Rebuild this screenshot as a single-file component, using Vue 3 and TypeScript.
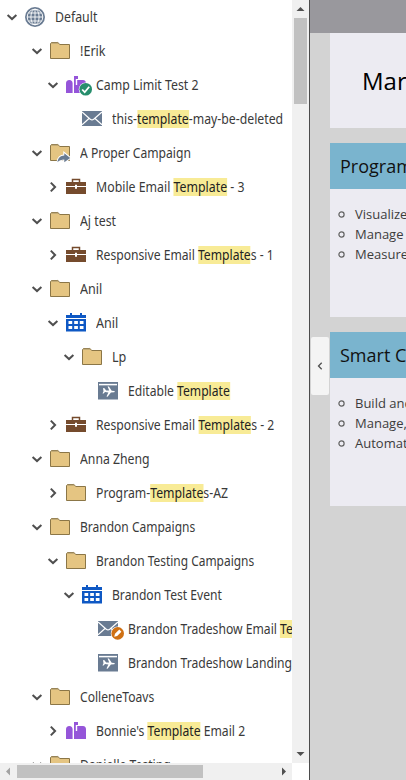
<script setup lang="ts">
type Icon = 'globe' | 'folder' | 'shared' | 'mailbox' | 'mailboxOk' | 'mail' | 'mailDraft' | 'briefcase' | 'calendar' | 'page'
interface Row {
  level: number
  icon: Icon
  open?: boolean
  parts: string[]
  fit?: number
}
// Odd-indexed parts are search matches; fit is the label's horizontal condensing.
const rows: Row[] = [
  { level: 0, icon: 'globe', open: true, parts: ['Default'] },
  { level: 1, icon: 'folder', open: true, parts: ['!Erik'], fit: 0.9 },
  { level: 2, icon: 'mailboxOk', open: true, parts: ['Camp Limit Test 2'] },
  { level: 3, icon: 'mail', parts: ['this-', 'template', '-may-be-deleted'], fit: 0.876 },
  { level: 1, icon: 'shared', open: true, parts: ['A Proper Campaign'], fit: 0.866 },
  { level: 2, icon: 'briefcase', open: false, parts: ['Mobile Email ', 'Template', ' - 3'] },
  { level: 1, icon: 'folder', open: true, parts: ['Aj test'] },
  { level: 2, icon: 'briefcase', open: false, parts: ['Responsive Email ', 'Template', 's - 1'], fit: 0.867 },
  { level: 1, icon: 'folder', open: true, parts: ['Anil'], fit: 0.9 },
  { level: 2, icon: 'calendar', open: true, parts: ['Anil'], fit: 0.9 },
  { level: 3, icon: 'folder', open: true, parts: ['Lp'], fit: 0.9 },
  { level: 4, icon: 'page', parts: ['Editable ', 'Template'], fit: 0.866 },
  { level: 2, icon: 'briefcase', open: false, parts: ['Responsive Email ', 'Template', 's - 2'], fit: 0.87 },
  { level: 1, icon: 'folder', open: true, parts: ['Anna Zheng'], fit: 0.875 },
  { level: 2, icon: 'folder', open: false, parts: ['Program-', 'Template', 's-AZ'], fit: 0.874 },
  { level: 1, icon: 'folder', open: true, parts: ['Brandon Campaigns'], fit: 0.858 },
  { level: 2, icon: 'folder', open: true, parts: ['Brandon Testing Campaigns'], fit: 0.854 },
  { level: 3, icon: 'calendar', open: true, parts: ['Brandon Test Event'], fit: 0.865 },
  { level: 4, icon: 'mailDraft', parts: ['Brandon Tradeshow Email ', 'Template'], fit: 0.868 },
  { level: 4, icon: 'page', parts: ['Brandon Tradeshow Landing Page'], fit: 0.868 },
  { level: 1, icon: 'folder', open: true, parts: ['ColleneToavs'], fit: 0.864 },
  { level: 2, icon: 'mailbox', open: false, parts: ["Bonnie's ", 'Template', ' Email 2'], fit: 0.87 },
  { level: 1, icon: 'folder', open: true, parts: ['Danielle Testing'], fit: 0.87 },
]
const cards = [
  { title: 'Programs', items: ['Visualize', 'Manage', 'Measure'] },
  { title: 'Smart Campaigns', items: ['Build and', 'Manage,', 'Automate'] },
]
</script>

<template>
  <div class="app">
    <aside class="side">
      <div class="upper">
        <div class="tree">
          <div v-for="(r, i) in rows" :key="i" class="row" :class="'l' + r.level">
            <span class="toggle">
              <svg v-if="r.open !== undefined" width="12" height="12" viewBox="0 0 12 12">
                <path :d="r.open ? 'M1.6 4 6 8.1 10.4 4' : 'M3.8 1.6 8.1 6 3.8 10.4'" fill="none" stroke="#4f4f4f" stroke-width="2" />
              </svg>
            </span>
            <svg class="icon" width="28" height="22" viewBox="0 0 28 22">
              <g v-if="r.icon === 'globe'">
                <circle cx="10" cy="11" r="10" fill="#697b92" />
                <g fill="none" stroke="#fff" stroke-width=".9">
                  <circle cx="10" cy="11" r="7.8" />
                  <ellipse cx="10" cy="11" rx="4.1" ry="7.8" />
                  <path d="M10 3v16M2 11h16M3.5 7h13M3.5 15h13" />
                </g>
              </g>
              <g v-else-if="r.icon === 'folder' || r.icon === 'shared'">
                <path d="M.5 18.5v-15l1-1h6.3l2.1 2h9.6v14z" fill="#e5c582" stroke="#8b7647" />
                <path d="M1 3h7" stroke="#a29169" />
                <path v-if="r.icon === 'shared'" d="M7.5 20.2c.6-4.6 3-6.4 6.8-6.6v-2.4l5.9 4.7-5.9 4.4v-2.8c-3 0-5 .9-6.8 2.7z" fill="#697b92" stroke="#fff" stroke-width="2" paint-order="stroke" />
              </g>
              <g v-else-if="r.icon === 'mailbox' || r.icon === 'mailboxOk'">
                <path d="M0 19V9.5Q0 6 3.3 6T6.6 9.5V19z" fill="#9555d9" />
                <path d="M8 19V2h4v3H9.8v6h1.4V6H17q3 0 3 3.5V19z" fill="#9555d9" />
                <g v-if="r.icon === 'mailboxOk'">
                  <circle cx="19.7" cy="15.3" r="6.9" fill="#fff" />
                  <circle cx="19.7" cy="15.3" r="6.3" fill="#268e6c" />
                  <path d="m16.2 15.5 2.5 2.7 4.5-5.5" fill="none" stroke="#fff" stroke-width="1.8" />
                </g>
              </g>
              <g v-else-if="r.icon === 'mail' || r.icon === 'mailDraft'">
                <path d="M0 3h20v15H0z" fill="#697b92" />
                <path d="m0 4 8.3 7.3q1.7 1.3 3.4 0L20 4M0 16.7l7-6.2m13 6.2-7-6.2" fill="none" stroke="#fff" stroke-width="1.2" />
                <g v-if="r.icon === 'mailDraft'">
                  <circle cx="19.7" cy="15.4" r="6.9" fill="#fff" />
                  <circle cx="19.7" cy="15.4" r="6.3" fill="#cf7013" />
                  <path d="m16.2 18.8.8-3 4.3-4.2 2.1 2.1-4.2 4.2z" fill="#fff" />
                </g>
              </g>
              <g v-else-if="r.icon === 'briefcase'">
                <path d="M6.5 7V3.5h7V7" fill="none" stroke="#754b2d" stroke-width="1.5" />
                <path d="M0 6h20v12H0z" fill="#754b2d" />
                <path d="M0 10.5h20" stroke="#fff" stroke-width="1" />
                <path d="M9 8.8h2v4H9z" fill="#fff" />
              </g>
              <g v-else-if="r.icon === 'calendar'">
                <path d="M0 3h20v16.5H0zM4 1h2v3H4zM14 1h2v3h-2z" fill="#0e58c4" />
                <path d="M0 6.5h20" stroke="#fff" stroke-width="1" />
                <path d="M2.5 9h3.7v3H2.5zm5.7 0h3.7v3H8.2zm5.6 0h3.7v3h-3.7zM2.5 14h3.7v3H2.5zm5.7 0h3.7v3H8.2zm5.6 0h3.7v3h-3.7z" fill="#fff" />
              </g>
              <g v-else>
                <path d="M0 2h20v17.5H0z" fill="#697b92" />
                <path d="M1 4.6h18" stroke="#fff" stroke-width="1.5" />
                <path d="m5 8.3 1.2-.2 2 2.4 3 .1-1.6-4h1.3l2.8 4.1 2.5.2q1.5.7 0 1.4l-3.3.2-3.3 4.2-1.1-.1 1.9-4.2-3.4-.3-1.4 1.4H4.5l1-2.3z" fill="#fff" />
              </g>
            </svg>
            <span class="label" :style="{ transform: `scaleX(${r.fit ?? 0.88})` }"><template v-for="(p, j) in r.parts" :key="j"><mark v-if="j % 2">{{ p }}</mark><template v-else>{{ p }}</template></template></span>
          </div>
        </div>
        <div class="vbar">
          <svg width="17" height="18" viewBox="0 0 17 18"><path d="M4.5 11h8L8.5 7z" fill="#505050" /></svg>
          <i class="vthumb"></i>
          <svg class="down" width="17" height="17" viewBox="0 0 17 17"><path d="M4.5 6h8l-4 4z" fill="#505050" /></svg>
        </div>
      </div>
      <div class="hbar">
        <svg width="17" height="17" viewBox="0 0 17 17"><path d="M10 4.5v8l-4-4z" fill="#a3a3a3" /></svg>
        <i class="hthumb"></i>
        <svg class="right" width="17" height="17" viewBox="0 0 17 17"><path d="M7 4.5v8l4-4z" fill="#505050" /></svg>
      </div>
    </aside>
    <main class="main">
      <div class="topbar"></div>
      <button class="handle" aria-label="Collapse">
        <svg width="8" height="10" viewBox="0 0 8 10"><path d="M5.7 1.8 2.5 5l3.2 3.2" fill="none" stroke="#505050" stroke-width="1.3" /></svg>
      </button>
      <div class="content">
        <header class="hero">Marketing</header>
        <section v-for="c in cards" :key="c.title" class="card">
          <h2>{{ c.title }}</h2>
          <ul>
            <li v-for="t in c.items" :key="t"><svg width="7" height="7" viewBox="0 0 7 7"><circle cx="3.5" cy="3.5" r="2.6" fill="none" stroke="#626262" stroke-width="1.2" /></svg>{{ t }}</li>
          </ul>
        </section>
      </div>
    </main>
  </div>
</template>

<style>
body { margin: 0; overflow: hidden; }
</style>
<style scoped>
.app { display: flex; width: 406px; height: 780px; overflow: hidden; background: #d3d3d3; }
.side { width: 309px; flex: none; display: flex; flex-direction: column; background: #fff; border-right: 1px solid #4b4b4b; }
.upper { display: flex; height: 763px; }
.tree { width: 292px; overflow: hidden; }
.row { display: flex; align-items: center; height: 34px; }
.l0 { padding-left: 6px; }
.l1 { padding-left: 31px; }
.l2 { padding-left: 47px; }
.l3 { padding-left: 63px; }
.l4 { padding-left: 79px; }
.toggle { width: 12px; height: 12px; margin-right: 7px; flex: none; }
.toggle svg { display: block; }
.icon { flex: none; margin-right: 2px; }
.label { font: 14px/18px "Noto Sans", sans-serif; color: #3a3a3a; white-space: pre; transform-origin: 0 50%; }
.label mark { display: inline-block; height: 18px; background: #f8eb96; color: #222; }
.vbar { width: 17px; background: #f0f0f0; display: flex; flex-direction: column; }
.vbar svg, .hbar svg { display: block; flex: none; }
.vthumb { width: 13px; height: 86px; margin-left: 2px; background: #c1c1c1; }
.down { margin-top: auto; }
.hbar { width: 292px; height: 17px; display: flex; align-items: center; background: #f0f0f0; }
.hthumb { width: 186px; height: 13px; background: #c1c1c1; }
.right { margin-left: auto; }
.main { position: relative; flex: 1; min-width: 0; overflow: hidden; font-family: "Open Sans", sans-serif; }
.topbar { height: 33px; background: #99989d; }
.handle { position: absolute; left: 1px; top: 337px; width: 18px; height: 58px; border: 0; border-radius: 2px; padding: 0; background: #f4f4f4; display: grid; place-items: center; }
.content { display: flex; flex-direction: column; gap: 15px; margin-left: 20px; width: 400px; }
.hero { box-sizing: border-box; height: 95px; padding-left: 32px; line-height: 96px; font-size: 24px; color: #000; background: #ecebf2; }
.card { height: 174px; background: #ecebf2; }
.card h2 { margin: 0; height: 46px; padding-left: 10px; font-size: 18px; font-weight: 400; line-height: 46px; color: #111; background: #7ab4ce; }
.card ul { list-style: none; margin: 0; padding: 15px 0 0 8px; }
.card li { display: flex; align-items: center; gap: 10px; height: 20px; font-size: 13px; color: #3c3c3c; }
</style>
